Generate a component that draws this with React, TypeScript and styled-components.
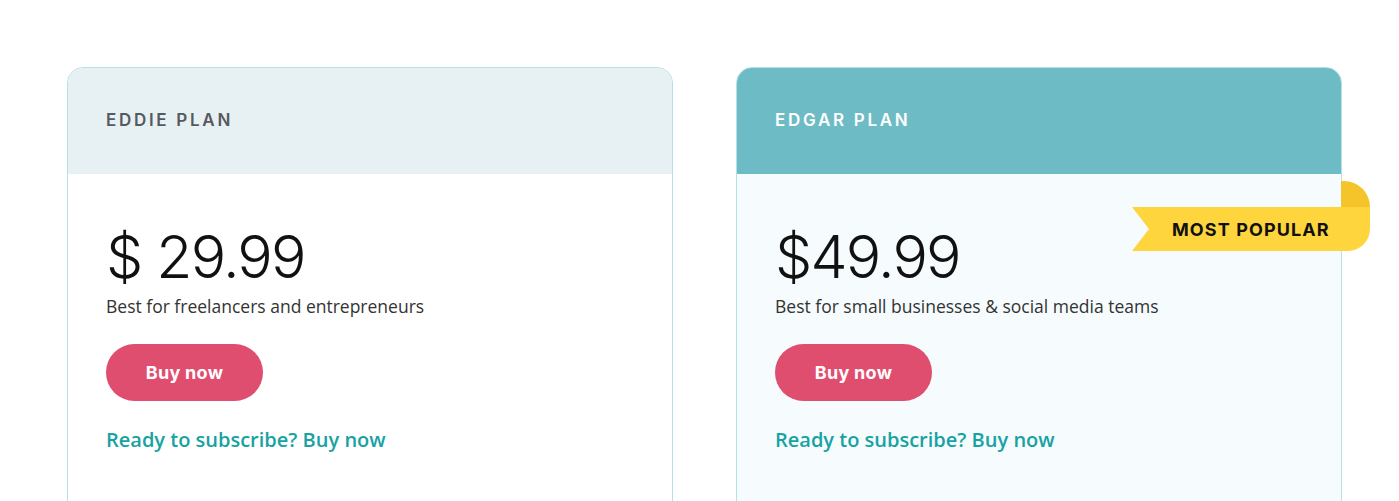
import React from "react";
import styled, { createGlobalStyle } from "styled-components";

const Global = createGlobalStyle`
  html, body { margin: 0; padding: 0; background: #ffffff; }
  body { font-family: "Open Sans", "Noto Sans", sans-serif; }
  * { box-sizing: border-box; }
`;

const Page = styled.div`
  display: grid;
  grid-template-columns: 606px 606px;
  column-gap: 63px;
  padding: 67px 0 0 67px;
  height: 501px;
  overflow: hidden;
`;

const Card = styled.div<{ $featured?: boolean }>`
  position: relative;
  border: 1px solid #b4e0e6;
  border-radius: 16px 16px 0 0;
  background: ${(p) => (p.$featured ? "#f6fcfe" : "#ffffff")};
  height: 460px;
`;

const Header = styled.div<{ $featured?: boolean }>`
  height: 106px;
  display: flex;
  align-items: center;
  padding: 0 38px 2px;
  border-radius: 15px 15px 0 0;
  background: ${(p) => (p.$featured ? "#6dbcc5" : "#e7f1f3")};
  color: ${(p) => (p.$featured ? "#ffffff" : "#555a5e")};
`;

const PlanName = styled.h2`
  margin: 0;
  font-family: "Inter", "Noto Sans", sans-serif;
  font-weight: 600;
  font-size: 17px;
  letter-spacing: 2.7px;
`;

const Body = styled.div`
  padding: 47px 38px 0;
  display: flex;
  flex-direction: column;
  align-items: flex-start;
`;

const Price = styled.div`
  font-family: "Inter", "Noto Sans", sans-serif;
  font-weight: 300;
  font-size: 59px;
  line-height: 72px;
  color: #111111;
  letter-spacing: -1.8px;
`;

const Desc = styled.p`
  margin: 0;
  font-size: 17.5px;
  line-height: 26px;
  color: #333333;
`;

const BuyButton = styled.button`
  margin-top: 25px;
  width: 157px;
  height: 57px;
  border: none;
  border-radius: 29px;
  background: #df4e6e;
  color: #ffffff;
  font-family: "Inter", "Noto Sans", sans-serif;
  font-weight: 700;
  font-size: 18px;
  letter-spacing: 0.3px;
  cursor: pointer;
`;

const SubLink = styled.a`
  margin-top: 25px;
  font-size: 20px;
  line-height: 28px;
  font-weight: 600;
  color: #17a2a3;
  text-decoration: none;
`;

const Ribbon = styled.div`
  position: absolute;
  left: 395px;
  top: 113px;
  width: 238px;
  height: 70px;
`;

const RibbonSvg = styled.svg`
  position: absolute;
  inset: 0;
`;

const RibbonText = styled.span`
  position: absolute;
  left: 40px;
  top: 26px;
  height: 44px;
  display: flex;
  align-items: center;
  font-family: "Inter", "Noto Sans", sans-serif;
  font-weight: 700;
  font-size: 18px;
  letter-spacing: 1.1px;
  color: #111111;
`;

type Plan = {
  name: string;
  price: string;
  desc: string;
  featured?: boolean;
};

const plans: Plan[] = [
  { name: "EDDIE PLAN", price: "$ 29.99", desc: "Best for freelancers and entrepreneurs" },
  { name: "EDGAR PLAN", price: "$49.99", desc: "Best for small businesses & social media teams", featured: true },
];

export default function App() {
  return (
    <>
      <Global />
      <Page>
        {plans.map((p) => (
          <Card key={p.name} $featured={p.featured}>
            <Header $featured={p.featured}>
              <PlanName>{p.name}</PlanName>
            </Header>
            <Body>
              <Price>{p.price}</Price>
              <Desc>{p.desc}</Desc>
              <BuyButton>Buy now</BuyButton>
              <SubLink href="#">Ready to subscribe? Buy now</SubLink>
            </Body>
            {p.featured && (
              <Ribbon>
                <RibbonSvg width="238" height="70" viewBox="0 0 238 70">
                  <path d="M209 0 H212 A26 26 0 0 1 238 26 V30 H209 Z" fill="#f4c42a" />
                  <path d="M0 26 H238 V48 A22 22 0 0 1 216 70 H0 L17 48 Z" fill="#ffd53d" />
                </RibbonSvg>
                <RibbonText>MOST POPULAR</RibbonText>
              </Ribbon>
            )}
          </Card>
        ))}
      </Page>
    </>
  );
}
